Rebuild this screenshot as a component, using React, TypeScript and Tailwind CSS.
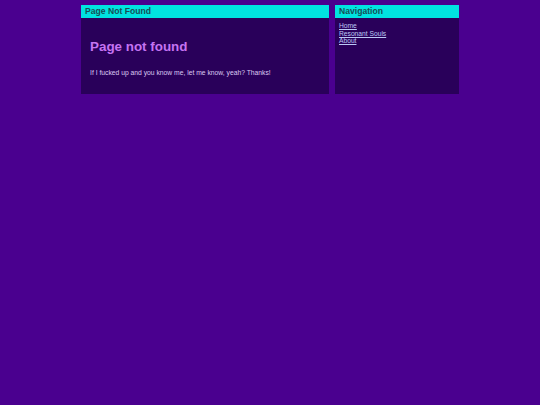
export default function App() {
  const font = { fontFamily: '"Liberation Sans", Arial, sans-serif' };
  return (
    <div className="min-h-[405px] w-full bg-[#4a008f] pt-[5px]" style={font}>
      <div className="mx-auto grid w-[378px] grid-cols-[2fr_1fr] gap-[6px]">
        <div className="flex flex-col bg-[#29005a]">
          <div className="h-[13px] bg-[#00e3e0] px-[4px] text-[8.6px] font-bold leading-[13px] text-[#174e55]">
            Page Not Found
          </div>
          <div className="px-[9px] pt-[21px] pb-[17px]">
            <h1 className="text-[13.4px] font-bold leading-[16px] text-[#c573f2]">Page not found</h1>
            <p className="mt-[14px] text-[6.75px] leading-[8px] text-[#dccaf2]">
              If I fucked up and you know me, let me know, yeah? Thanks!
            </p>
          </div>
        </div>
        <div className="flex flex-col bg-[#29005a]">
          <div className="h-[13px] bg-[#00e3e0] px-[4px] text-[8.6px] font-bold leading-[13px] text-[#174e55]">
            Navigation
          </div>
          <div className="flex flex-col items-start px-[4px] pt-[4px] text-[6.7px] leading-[7.5px]">
            <a href="#" className="text-[#bcc8f6] underline">Home</a>
            <a href="#" className="text-[#bcc8f6] underline">Resonant Souls</a>
            <a href="#" className="text-[#bcc8f6] underline">About</a>
          </div>
        </div>
      </div>
    </div>
  );
}
